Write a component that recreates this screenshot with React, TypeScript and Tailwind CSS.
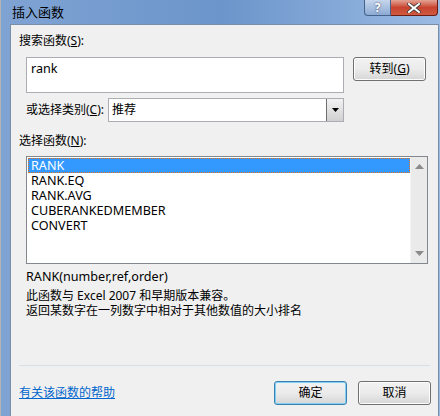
import React from 'react';

const functions = ['RANK', 'RANK.EQ', 'RANK.AVG', 'CUBERANKEDMEMBER', 'CONVERT'];

const font = { fontFamily: '"Noto Sans", "Noto Sans CJK SC", sans-serif' };

const Btn = ({ children, primary }: { children: React.ReactNode; primary?: boolean }) => (
  <button
    className={
      'w-[73px] h-[24px] rounded-[3px] border text-[12px] text-black flex items-center justify-center bg-gradient-to-b from-[#f2f2f2] via-[#ebebeb] to-[#d6d6d6] ' +
      (primary ? 'border-[#3c7fb1] shadow-[inset_0_0_0_1px_#7ed0f4]' : 'border-[#707070] shadow-[inset_0_0_0_1px_#fcfcfc]')
    }
  >
    {children}
  </button>
);

const App = () => {
  return (
    <div className="w-[440px] h-[416px] flex overflow-hidden text-[12px] text-black" style={font}>
      {/* spreadsheet peeking out on the left */}
      <div className="w-[3px] h-full bg-[#e3e3e3] border-r border-[#b5b5b5]" />

      {/* window frame */}
      <div className="flex-1 flex flex-col bg-gradient-to-r from-[#7fa3d3] via-[#6c95cb] to-[#9bbbe3] pl-[9px] pr-[3px]">
        {/* title bar */}
        <div className="h-[24px] flex items-start justify-between">
          <div className="pt-[4px] pl-[2px] text-[13px] leading-[16px] text-black">插入函数</div>
          <div className="flex mr-[1px]">
            <div className="w-[27px] h-[16px] rounded-bl-[4px] border border-t-0 border-[#44628a] bg-gradient-to-b from-[#c6d6ec] to-[#8daad4] flex items-center justify-center text-white font-bold text-[12px] leading-none [text-shadow:0_0_2px_#334]">
              ?
            </div>
            <div className="w-[47px] h-[16px] rounded-br-[4px] border border-t-0 border-l-0 border-[#6b1d14] bg-gradient-to-b from-[#e3a294] via-[#c8432f] to-[#cf5b40] flex items-center justify-center">
              <svg width="14" height="10" viewBox="0 0 14 10">
                <path d="M2 1 L12 9 M12 1 L2 9" stroke="#3b3b3b" strokeWidth="3.6" strokeLinecap="square" />
                <path d="M2 1 L12 9 M12 1 L2 9" stroke="#fff" strokeWidth="2" strokeLinecap="square" />
              </svg>
            </div>
          </div>
        </div>

        {/* client area */}
        <div className="flex-1 bg-[#f0f0f0] border border-b-0 border-[#7b8ea8] pl-[8px] pr-[8px] flex flex-col">
          <div className="mt-[8px] leading-[16px]">
            搜索函数(<span className="underline">S</span>):
          </div>

          <div className="mt-[8px] flex ml-[7px]">
            <div className="w-[318px] h-[36px] bg-white border border-[#abadb3] px-[4px] pt-[2px] leading-[18px] text-[12.6px]">rank</div>
            <div className="ml-[9px]">
              <Btn>
                转到(<span className="underline">G</span>)
              </Btn>
            </div>
          </div>

          <div className="mt-[5px] flex items-center ml-[7px]">
            <div className="w-[82px] leading-[16px]">
              或选择类别(<span className="underline">C</span>):
            </div>
            <div className="w-[236px] h-[24px] bg-white border border-[#abadb3] flex">
              <div className="flex-1 px-[3px] leading-[22px]">推荐</div>
              <div className="w-[17px] h-full border-l border-[#707070] bg-gradient-to-b from-[#f2f2f2] to-[#d0d0d0] flex items-center justify-center">
                <svg width="7" height="4" viewBox="0 0 7 4">
                  <path d="M0 0 H7 L3.5 4 Z" fill="#000" />
                </svg>
              </div>
            </div>
          </div>

          <div className="mt-[11px] leading-[16px]">
            选择函数(<span className="underline">N</span>):
          </div>

          <div className="mt-[7px] ml-[7px] w-[402px] h-[108px] bg-white border border-[#828790] flex">
            <div className="flex-1 pt-[1px] pl-[1px]">
              {functions.map((f, i) => (
                <div
                  key={f}
                  className={
                    'h-[15px] leading-[15px] px-[3px] text-[12.6px] ' +
                    (i === 0 ? 'bg-[#3399ff] text-white outline-1 outline-dotted outline-[#e07020] -outline-offset-1' : 'text-black')
                  }
                >
                  {f}
                </div>
              ))}
            </div>
            <div className="w-[17px] h-full bg-[#eaeaea] border-l border-[#f4f4f4] flex flex-col items-center justify-between py-[7px]">
              <svg width="9" height="5" viewBox="0 0 9 5">
                <path d="M0 5 H9 L4.5 0 Z" fill="#8a8a8a" />
              </svg>
              <svg width="9" height="5" viewBox="0 0 9 5">
                <path d="M0 0 H9 L4.5 5 Z" fill="#8a8a8a" />
              </svg>
            </div>
          </div>

          <div className="mt-[5px] ml-[7px] leading-[16px] text-[12.6px]">RANK(number,ref,order)</div>
          <div className="mt-[3px] ml-[7px] leading-[15px]">
            <div>此函数与 Excel 2007 和早期版本兼容。</div>
            <div>返回某数字在一列数字中相对于其他数值的大小排名</div>
          </div>

          <div className="mt-[47px] h-[1px] bg-[#d5dfe5] w-[411px]" />

          <div className="mt-[15px] flex items-center justify-between">
            <a className="text-[#0066cc] underline leading-[16px] cursor-pointer">有关该函数的帮助</a>
            <div className="flex gap-[11px] mr-[-1px]">
              <Btn primary>确定</Btn>
              <Btn>取消</Btn>
            </div>
          </div>
        </div>
      </div>
    </div>
  );
};

export default App;
